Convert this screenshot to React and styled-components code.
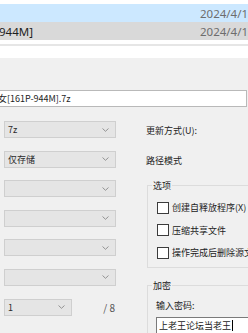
import React from 'react';
import styled, {createGlobalStyle} from 'styled-components';

const Global = createGlobalStyle`
    html, body {
        margin: 0;
        padding: 0;
        background: #f0f0f0;
        overflow: hidden;
    }
    body {
        font-family: "Noto Sans CJK SC", "Noto Sans", sans-serif;
        font-size: 9px;
        color: #222;
    }
`

const Screen = styled.div`
    width: 248px;
    height: 333px;
    overflow: hidden;
    display: flex;
    flex-direction: column;
`

const ListArea = styled.div`
    flex: none;
    background: #ffffff;
    height: 58px;
    padding-top: 4px;
    box-sizing: border-box;
    display: flex;
    flex-direction: column;
`

const FileRow = styled.div`
    flex: none;
    height: 18px;
    display: grid;
    grid-template-columns: 200px 80px;
    align-items: center;
    background: ${p => p.selected ? '#cce8ff' : '#d9d9d9'};
    font-family: "Noto Sans", sans-serif;
    font-size: 11.5px;
    white-space: nowrap;
`

const FileName = styled.span`
    color: #1e1e1e;
    margin-left: -1px;
`

const FileDate = styled.span`
    color: #6d6d6d;
`

const ListFoot = styled.div`
    flex: none;
    margin-top: 4px;
    border-top: 2px solid #e6e6e6;
`

const Dialog = styled.div`
    flex: none;
    padding-top: 32px;
    display: flex;
    flex-direction: column;
`

const NameBox = styled.div`
    flex: none;
    height: 17px;
    box-sizing: border-box;
    margin-left: -3px;
    width: 250px;
    background: #fff;
    border: 1px solid #b9b9b9;
    display: flex;
    align-items: center;
    white-space: nowrap;
    color: #1e1e1e;
`

const Body = styled.div`
    margin-top: 14px;
    padding-left: 4px;
    display: grid;
    grid-template-columns: 112px 150px;
    column-gap: 30px;
`

const Column = styled.div`
    display: flex;
    flex-direction: column;
    gap: 12.6px;
`

const Combo = styled.div`
    flex: none;
    height: 17px;
    width: ${p => p.w || 112}px;
    box-sizing: border-box;
    background: #e5e5e5;
    border: 1px solid #cfcfcf;
    display: flex;
    align-items: center;
    justify-content: space-between;
    padding: 0 6px 0 3px;
    color: #2a2a2a;
`

const Chevron = () => (
    <svg width="7" height="4" viewBox="0 0 7 4">
        <path d="M0.5 0.5 L3.5 3.3 L6.5 0.5" fill="none" stroke="#8a8a8a" strokeWidth="0.9"/>
    </svg>
)

const PageRow = styled.div`
    display: flex;
    align-items: center;
    justify-content: space-between;
`

const PageCount = styled.span`
    color: #555;
    font-size: 10px;
    padding-right: 1px;
`

const RightColumn = styled.div`
    display: flex;
    flex-direction: column;
`

const Label = styled.div`
    flex: none;
    height: 17px;
    line-height: 20px;
    white-space: nowrap;
    margin-bottom: ${p => p.mb || 0}px;
`

const Group = styled.fieldset`
    flex: none;
    margin: ${p => p.mt}px 0 0 1px;
    padding: 0 0 ${p => p.pb || 0}px 4px;
    border: 1px solid #dcdcdc;
    min-width: 0;
    display: flex;
    flex-direction: column;
`

const Legend = styled.legend`
    padding: 0 1px;
    line-height: 12px;
`

const CheckList = styled.div`
    margin-top: 10px;
    margin-left: 5px;
    display: flex;
    flex-direction: column;
    gap: 10.5px;
`

const CheckRow = styled.label`
    display: flex;
    align-items: center;
    gap: 3px;
    height: 12px;
    white-space: nowrap;
`

const Box = styled.span`
    width: 10px;
    height: 10px;
    border: 1px solid #3c3c3c;
    background: #fff;
    flex: none;
`

const PassLabel = styled.div`
    margin-top: 8px;
    margin-left: 4px;
    line-height: 12px;
`

const PassInput = styled.div`
    margin-top: 5px;
    margin-left: 4px;
    height: 18px;
    box-sizing: border-box;
    background: #fff;
    border: 1px solid #7a7a7a;
    border-right: none;
    display: flex;
    align-items: center;
    padding-left: 2px;
    white-space: nowrap;
`

const Caret = styled.span`
    display: inline-block;
    width: 1px;
    height: 11px;
    background: #000;
    margin-left: 1px;
`

export default function App() {
    const combos = ['7z', '仅存储', '', '', '', ''];

    return (
        <Screen>
            <Global/>
            <ListArea>
                <FileRow selected>
                    <span></span>
                    <FileDate>2024/4/19</FileDate>
                </FileRow>
                <FileRow>
                    <FileName>944M]</FileName>
                    <FileDate>2024/4/18</FileDate>
                </FileRow>
                <ListFoot/>
            </ListArea>
            <Dialog>
                <NameBox>女[161P-944M].7z</NameBox>
                <Body>
                    <Column>
                        {combos.map((c, i) => (
                            <Combo key={i}>
                                <span>{c}</span>
                                <Chevron/>
                            </Combo>
                        ))}
                        <PageRow>
                            <Combo w={68}>
                                <span>1</span>
                                <Chevron/>
                            </Combo>
                            <PageCount>/ 8</PageCount>
                        </PageRow>
                    </Column>
                    <RightColumn>
                        <Label mb={12.6}>更新方式(U):</Label>
                        <Label>路径模式</Label>
                        <Group mt={12} pb={8}>
                            <Legend>选项</Legend>
                            <CheckList>
                                <CheckRow><Box/>创建自释放程序(X)</CheckRow>
                                <CheckRow><Box/>压缩共享文件</CheckRow>
                                <CheckRow><Box/>操作完成后删除源文件</CheckRow>
                            </CheckList>
                        </Group>
                        <Group mt={12} pb={10}>
                            <Legend>加密</Legend>
                            <PassLabel>输入密码:</PassLabel>
                            <PassInput>上老王论坛当老王<Caret/></PassInput>
                        </Group>
                    </RightColumn>
                </Body>
            </Dialog>
        </Screen>
    )
}
